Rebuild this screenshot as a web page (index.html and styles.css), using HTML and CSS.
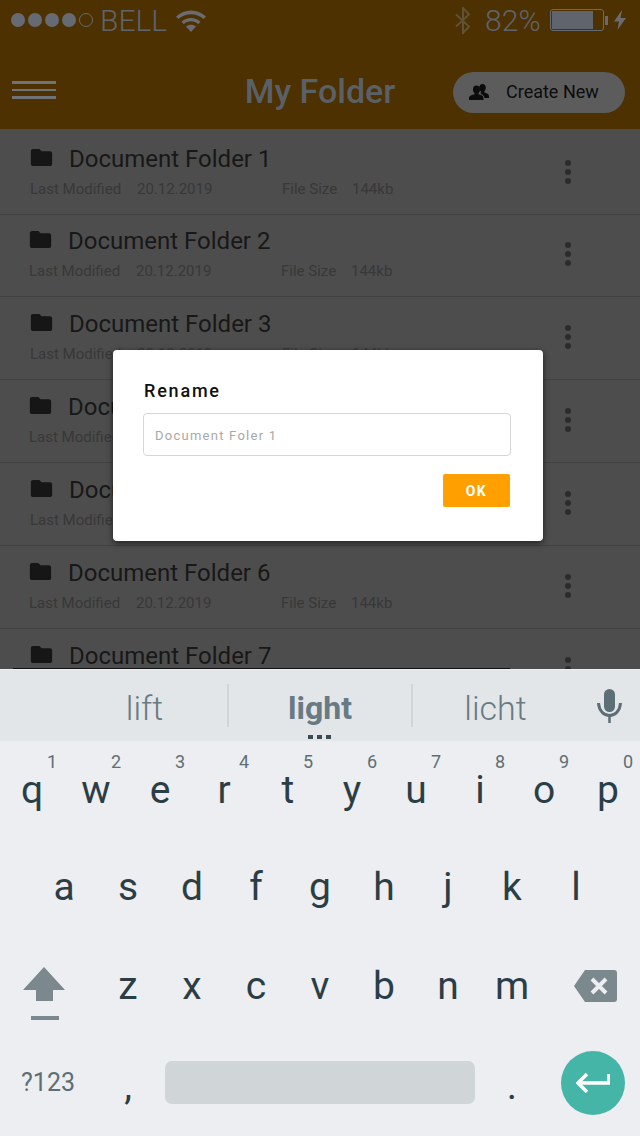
FILE: index.html
```html
<!DOCTYPE html>
<html lang="en">
<head>
    <meta charset="UTF-8">
    <meta name="viewport" content="width=device-width, initial-scale=1.0">
    <title>My Folder</title>
    <link rel="stylesheet" href="styles.css">
</head>
<body>
    <svg class="defs" width="0" height="0">
        <symbol id="folder" viewBox="2 4 20 16"><path d="M10 4H4c-1.1 0-2 .9-2 2v12c0 1.1.9 2 2 2h16c1.1 0 2-.9 2-2V8c0-1.1-.9-2-2-2h-8z"/></symbol>
        <symbol id="more" viewBox="0 0 6 24"><circle cx="3" cy="3" r="3"/><circle cx="3" cy="12" r="3"/><circle cx="3" cy="21" r="3"/></symbol>
    </svg>

    <div class="page">
        <div class="app">
            <div class="status">
                <div class="signal">
                    <span class="dot"></span><span class="dot"></span><span class="dot"></span><span class="dot"></span><span class="dot empty"></span>
                </div>
                <span class="carrier">BELL</span>
                <svg class="wifi" viewBox="0 0 32 24"><path d="M1 8.500C9.500 .5 22.500 .5 31 8.500L28.600 11C21.500 4.500 10.500 4.500 3.400 11Z"/><path d="M6.500 13.800C12 8.800 20 8.800 25.500 13.800L23.200 16.200C18.800 12.400 13.200 12.400 8.800 16.200Z"/><path d="M11 18.500C14 16.200 18 16.200 21 18.500L16 24Z"/></svg>
                <svg class="bluetooth" viewBox="0 0 16 27"><path d="M1 7.500L14 19.500L8 26V1L14 7.500L1 19.500" fill="none" stroke="#5e5238" stroke-width="2"/></svg>
                <span class="percent">82%</span>
                <div class="battery"><div class="battery-fill"></div></div>
                <div class="battery-nub"></div>
                <svg class="bolt" viewBox="0 0 12 20"><path d="M8 0L0 11.500H5L3.500 20L12 8H6.500Z"/></svg>
            </div>

            <div class="header">
                <div class="menu"><span></span><span></span><span></span></div>
                <h1 class="title">My Folder</h1>
                <button class="create">
                    <svg class="people" viewBox="0 0 20 16"><path d="M13.500 0C15.600 0 16.800 1.600 16.800 3.700C16.800 5.300 16.200 6.500 15.300 7.300V8.600C17.500 9.300 20 10 20 12V14H15.500C15.300 11.800 13.500 10.700 11.800 10V7.300C10.900 6.500 10.300 5.300 10.300 3.700C10.300 1.600 11.400 0 13.500 0Z"/><path d="M7.500 1.500C9.800 1.500 11 3.200 11 5.400C11 7 10.400 8.300 9.500 9.100V10.300C12 11.100 14.500 11.800 14.500 14V16H0V14C0 11.800 3 11.100 5.500 10.300V9.100C4.600 8.300 4 7 4 5.400C4 3.200 5.200 1.500 7.500 1.500Z"/></svg>
                    Create New
                </button>
            </div>

            <div class="list">
                <div class="row">
                    <div class="row-text">
                        <div class="row-title"><svg class="folder"><use href="#folder"/></svg>Document Folder 1</div>
                        <div class="row-meta"><span class="modified">Last Modified</span><span class="date">20.12.2019</span><span class="size">File Size</span><span>144kb</span></div>
                    </div>
                    <svg class="more"><use href="#more"/></svg>
                </div>
                <div class="row">
                    <div class="row-text">
                        <div class="row-title"><svg class="folder"><use href="#folder"/></svg>Document Folder 2</div>
                        <div class="row-meta"><span class="modified">Last Modified</span><span class="date">20.12.2019</span><span class="size">File Size</span><span>144kb</span></div>
                    </div>
                    <svg class="more"><use href="#more"/></svg>
                </div>
                <div class="row">
                    <div class="row-text">
                        <div class="row-title"><svg class="folder"><use href="#folder"/></svg>Document Folder 3</div>
                        <div class="row-meta"><span class="modified">Last Modified</span><span class="date">20.12.2019</span><span class="size">File Size</span><span>144kb</span></div>
                    </div>
                    <svg class="more"><use href="#more"/></svg>
                </div>
                <div class="row">
                    <div class="row-text">
                        <div class="row-title"><svg class="folder"><use href="#folder"/></svg>Document Folder 4</div>
                        <div class="row-meta"><span class="modified">Last Modified</span><span class="date">20.12.2019</span><span class="size">File Size</span><span>144kb</span></div>
                    </div>
                    <svg class="more"><use href="#more"/></svg>
                </div>
                <div class="row">
                    <div class="row-text">
                        <div class="row-title"><svg class="folder"><use href="#folder"/></svg>Document Folder 5</div>
                        <div class="row-meta"><span class="modified">Last Modified</span><span class="date">20.12.2019</span><span class="size">File Size</span><span>144kb</span></div>
                    </div>
                    <svg class="more"><use href="#more"/></svg>
                </div>
                <div class="row">
                    <div class="row-text">
                        <div class="row-title"><svg class="folder"><use href="#folder"/></svg>Document Folder 6</div>
                        <div class="row-meta"><span class="modified">Last Modified</span><span class="date">20.12.2019</span><span class="size">File Size</span><span>144kb</span></div>
                    </div>
                    <svg class="more"><use href="#more"/></svg>
                </div>
                <div class="row">
                    <div class="row-text">
                        <div class="row-title"><svg class="folder"><use href="#folder"/></svg>Document Folder 7</div>
                    </div>
                    <svg class="more"><use href="#more"/></svg>
                </div>
            </div>

            <div class="edge"></div>

            <div class="dialog">
                <h2 class="dialog-title">Rename</h2>
                <div class="dialog-input">Document Foler 1</div>
                <div class="dialog-actions"><button class="ok">OK</button></div>
            </div>
        </div>

        <div class="keyboard">
            <div class="suggestions">
                <span class="word first">lift</span>
                <span class="word strong">light</span>
                <span class="word">licht</span>
                <svg class="mic" viewBox="0 0 25 34"><rect x="7" y="0" width="11" height="23" rx="5.500"/><path d="M1.500 14C2 22 7 26.500 12.500 26.500S23 22 23.500 14" fill="none" stroke="#5e6e76" stroke-width="3"/><rect x="11.250" y="26" width="2.500" height="8"/></svg>
                <div class="ellipsis"><span></span><span></span><span></span></div>
            </div>
            <div class="keys">
                <div class="key-row">
                    <div class="key">q<sup>1</sup></div>
                    <div class="key">w<sup>2</sup></div>
                    <div class="key">e<sup>3</sup></div>
                    <div class="key">r<sup>4</sup></div>
                    <div class="key">t<sup>5</sup></div>
                    <div class="key">y<sup>6</sup></div>
                    <div class="key">u<sup>7</sup></div>
                    <div class="key">i<sup>8</sup></div>
                    <div class="key">o<sup>9</sup></div>
                    <div class="key">p<sup>0</sup></div>
                </div>
                <div class="key-row center">
                    <div class="key">a</div>
                    <div class="key">s</div>
                    <div class="key">d</div>
                    <div class="key">f</div>
                    <div class="key">g</div>
                    <div class="key">h</div>
                    <div class="key">j</div>
                    <div class="key">k</div>
                    <div class="key">l</div>
                </div>
                <div class="key-row">
                    <div class="key side">
                        <svg class="shift" viewBox="0 0 42 53"><path d="M21 0L42 23H30V34H13V23H0Z"/><rect x="8" y="49" width="28" height="4"/></svg>
                    </div>
                    <div class="key">z</div>
                    <div class="key">x</div>
                    <div class="key">c</div>
                    <div class="key">v</div>
                    <div class="key">b</div>
                    <div class="key">n</div>
                    <div class="key">m</div>
                    <div class="key side">
                        <svg class="backspace" viewBox="0 0 43 32"><path d="M11 0H40C42 0 43 1 43 3V29C43 31 42 32 40 32H11L0 16Z"/><path d="M18 9L32 23M32 9L18 23" fill="none" stroke="#eceef1" stroke-width="4"/></svg>
                    </div>
                </div>
                <div class="key-row bottom">
                    <div class="key symbols">?123</div>
                    <div class="key mark">,</div>
                    <div class="space"></div>
                    <div class="key mark">.</div>
                    <div class="enter">
                        <svg viewBox="0 0 34 22"><path d="M33 2V11H3M11 2L2 11L11 20" fill="none" stroke="#fff" stroke-width="3.500"/></svg>
                    </div>
                </div>
            </div>
        </div>
    </div>
</body>
</html>
```

FILE: styles.css
```css
* {
    box-sizing: border-box;
}

body {
    margin: 0;
    font-family: Roboto, "Liberation Sans", sans-serif;
}

.defs {
    display: block;
    height: 0;
}

.page {
    width: 640px;
    height: 1136px;
    display: flex;
    flex-direction: column;
    overflow: hidden;
}

.app {
    position: relative;
    height: 669px;
    background-color: #4d4d4d;
    overflow: hidden;
}

/* status bar */
.status {
    height: 45px;
    background-color: #4d3100;
    display: flex;
    align-items: center;
    padding: 0 0 5px 11px;
    color: #5f646d;
}

.signal {
    display: flex;
    gap: 3px;
}

.dot {
    width: 14px;
    height: 14px;
    border-radius: 50%;
    background-color: #666a73;
}

.dot.empty {
    background: none;
    border: 1px solid #666a73;
}

.carrier {
    font-size: 30px;
    font-weight: 300;
    margin-left: 7px;
}

.wifi {
    width: 32px;
    height: 24px;
    fill: #6a6c72;
    margin-left: 8px;
}

.bluetooth {
    width: 16px;
    height: 27px;
    margin-left: 248px;
}

.percent {
    font-size: 30px;
    font-weight: 300;
    margin-left: 14px;
}

.battery {
    width: 54px;
    height: 22px;
    margin-left: 9px;
    border: 1px solid #666a73;
    border-radius: 3px;
    padding: 1px;
}

.battery-fill {
    width: 41px;
    height: 100%;
    background-color: #5f646d;
}

.battery-nub {
    width: 3px;
    height: 9px;
    margin-left: 1px;
    background-color: #666a73;
}

.bolt {
    width: 12px;
    height: 20px;
    fill: #6a6c72;
    margin-left: 6px;
}

/* header */
.header {
    height: 84px;
    background-color: #4d3100;
    display: grid;
    grid-template-columns: 1fr auto 1fr;
    align-items: center;
    padding: 11px 15px 0;
}

.menu {
    width: 44px;
    margin: -5px 0 0 -3px;
    display: flex;
    flex-direction: column;
    gap: 5px;
}

.menu span {
    height: 2.500px;
    background-color: #70727a;
}

.title {
    margin: -3px 0 0;
    font-size: 34px;
    font-weight: 500;
    color: #5a6068;
}

.create {
    justify-self: end;
    width: 172px;
    height: 41px;
    border: none;
    border-radius: 21px;
    background-color: #5c5c5c;
    color: #0c0c0c;
    font-family: inherit;
    font-size: 18px;
    display: flex;
    align-items: center;
    padding: 0 0 2px 16px;
    gap: 17px;
}

.people {
    width: 20px;
    height: 16px;
    fill: #0c0c0c;
}

/* list */
.list {
    padding-top: 3px;
}

.row {
    height: 83px;
    border-bottom: 1px solid #414141;
    display: flex;
    justify-content: space-between;
    padding: 13px 69px 0 29px;
}

.row:nth-child(2) {
    height: 82px;
    padding-top: 12px;
}

.row:nth-child(odd) {
    padding-left: 30px;
}

.row-title {
    display: flex;
    align-items: center;
    gap: 16px;
    font-size: 24px;
    line-height: 28px;
    color: #181818;
}

.folder {
    width: 23px;
    height: 17px;
    fill: #161616;
    margin-top: -3px;
}

.row-meta {
    display: flex;
    font-size: 15px;
    line-height: 18px;
    margin-top: 7px;
    color: #383838;
}

.modified {
    width: 107px;
}

.date {
    width: 145px;
}

.size {
    width: 70px;
}

.more {
    width: 6px;
    height: 24px;
    fill: #2c2c2c;
    margin-top: 15px;
}

.edge {
    position: absolute;
    left: 13px;
    bottom: 0;
    width: 497px;
    height: 1px;
    background-color: #111;
}

/* rename dialog */
.dialog {
    position: absolute;
    left: 113px;
    top: 350px;
    width: 430px;
    height: 191px;
    background-color: #fff;
    border-radius: 4px;
    box-shadow: 0 2px 6px rgba(0, 0, 0, 0.6);
    padding: 30px 32px 0 30px;
}

.dialog-title {
    margin: 0 0 11px 1px;
    font-size: 18px;
    line-height: 22px;
    font-weight: 500;
    letter-spacing: 1.800px;
    color: #111;
}

.dialog-input {
    height: 43px;
    border: 1px solid #d6d6d6;
    border-radius: 4px;
    padding-left: 11px;
    font-size: 13px;
    line-height: 43px;
    letter-spacing: 1.250px;
    color: #a8a8a8;
}

.dialog-actions {
    display: flex;
    justify-content: flex-end;
    margin-top: 18px;
    padding-right: 1px;
}

.ok {
    width: 67px;
    height: 33px;
    border: none;
    border-radius: 2px;
    background-color: #ffa000;
    color: #fff;
    font-family: inherit;
    font-size: 14px;
    font-weight: 700;
    letter-spacing: 1.500px;
}

/* keyboard */
.keyboard {
    flex: 1;
    background-color: #eceef1;
    color: #2c3e45;
}

.suggestions {
    position: relative;
    height: 72px;
    background-color: #e3e6e8;
    border-top: 1px solid #eceff1;
    display: grid;
    grid-template-columns: 227px 186px 165px 1fr;
    align-items: center;
}

.word {
    height: 43px;
    font-size: 34px;
    line-height: 49px;
    font-weight: 300;
    color: #687a83;
    text-align: center;
}

.word.first {
    padding-left: 62px;
}

.word.strong {
    font-size: 32px;
    font-weight: 700;
    border-left: 2px solid #cfd5d8;
    border-right: 2px solid #cfd5d8;
}

.mic {
    width: 25px;
    height: 34px;
    fill: #5e6e76;
    justify-self: center;
}

.ellipsis {
    position: absolute;
    left: 308px;
    bottom: 2px;
    display: flex;
    gap: 4px;
}

.ellipsis span {
    width: 5px;
    height: 4px;
    background-color: #3c4a52;
}

.key-row {
    height: 98px;
    display: flex;
}

.key-row.center {
    justify-content: center;
}

.key-row.bottom {
    height: 95px;
    align-items: center;
}

.key {
    position: relative;
    width: 64px;
    height: 98px;
    font-size: 39px;
    line-height: 98px;
    text-align: center;
}

.center .key {
    line-height: 96px;
}

.key sup {
    position: absolute;
    top: 12px;
    right: 7px;
    font-size: 18px;
    line-height: 18px;
    color: #5e6e76;
}

.key.side {
    width: 96px;
    display: flex;
    align-items: center;
    justify-content: center;
}

.shift {
    width: 42px;
    height: 53px;
    fill: #7b888e;
    margin: 15px 8px 0 0;
}

.backspace {
    width: 43px;
    height: 32px;
    fill: #7b888e;
    margin-left: 7px;
}

.symbols {
    width: 96px;
    font-size: 25px;
    color: #5e6e76;
}

.mark {
    line-height: 104px;
}

.space {
    width: 310px;
    height: 43px;
    margin: 0 5px;
    border-radius: 7px;
    background-color: #d0d5d8;
}

.enter {
    width: 64px;
    height: 64px;
    margin-left: 17px;
    border-radius: 50%;
    background-color: #45b5a8;
    display: flex;
    align-items: center;
    justify-content: center;
}

.enter svg {
    width: 34px;
    height: 22px;
}
```
